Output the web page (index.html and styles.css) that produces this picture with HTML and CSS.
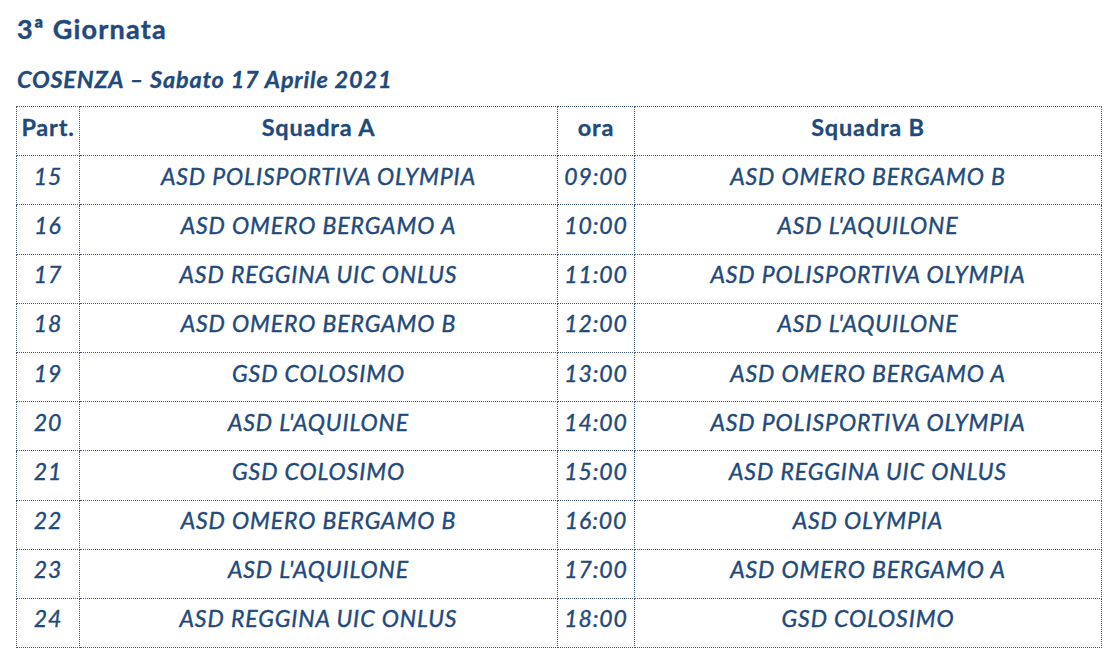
FILE: index.html
```html
<!DOCTYPE html>
<html lang="it">
<head>
<meta charset="utf-8">
<title>3ª Giornata</title>
<link rel="stylesheet" href="styles.css">
</head>
<body>
<div class="page">
  <h1 class="title">3ª Giornata</h1>
  <h2 class="subtitle">COSENZA – Sabato 17 Aprile 2021</h2>
  <table class="schedule">
    <colgroup>
      <col class="c-part"><col class="c-team"><col class="c-time"><col class="c-team-b">
    </colgroup>
    <thead>
      <tr><th>Part.</th><th>Squadra A</th><th>ora</th><th>Squadra B</th></tr>
    </thead>
    <tbody>
      <tr><td>15</td><td>ASD POLISPORTIVA OLYMPIA</td><td>09:00</td><td>ASD OMERO BERGAMO B</td></tr>
      <tr><td>16</td><td>ASD OMERO BERGAMO A</td><td>10:00</td><td>ASD L'AQUILONE</td></tr>
      <tr><td>17</td><td>ASD REGGINA UIC ONLUS</td><td>11:00</td><td>ASD POLISPORTIVA OLYMPIA</td></tr>
      <tr><td>18</td><td>ASD OMERO BERGAMO B</td><td>12:00</td><td>ASD L'AQUILONE</td></tr>
      <tr><td>19</td><td>GSD COLOSIMO</td><td>13:00</td><td>ASD OMERO BERGAMO A</td></tr>
      <tr><td>20</td><td>ASD L'AQUILONE</td><td>14:00</td><td>ASD POLISPORTIVA OLYMPIA</td></tr>
      <tr><td>21</td><td>GSD COLOSIMO</td><td>15:00</td><td>ASD REGGINA UIC ONLUS</td></tr>
      <tr><td>22</td><td>ASD OMERO BERGAMO B</td><td>16:00</td><td>ASD OLYMPIA</td></tr>
      <tr><td>23</td><td>ASD L'AQUILONE</td><td>17:00</td><td>ASD OMERO BERGAMO A</td></tr>
      <tr><td>24</td><td>ASD REGGINA UIC ONLUS</td><td>18:00</td><td>GSD COLOSIMO</td></tr>
    </tbody>
  </table>
</div>
</body>
</html>
```

FILE: styles.css
```css
html, body {
  margin: 0;
  padding: 0;
  background: #ffffff;
}

.page {
  padding: 13px 0 0 16px;
  font-family: "Lato", "Liberation Sans", sans-serif;
  color: #1f4a7c;
}

.title {
  margin: 0;
  font-size: 27px;
  font-weight: 700;
  line-height: 32px;
  letter-spacing: 1.2px;
  padding-left: 1px;
  -webkit-text-stroke: 0.4px #1f4a7c;
}

.subtitle {
  margin: 20px 0 0 0;
  font-size: 23.5px;
  font-weight: 700;
  font-style: italic;
  line-height: 28px;
  letter-spacing: 0.8px;
  padding-left: 1px;
  -webkit-text-stroke: 0.3px #1f4a7c;
}

.schedule {
  margin-top: 13px;
  border-collapse: collapse;
  table-layout: fixed;
  width: 1085px;
}

.c-part { width: 63px; }
.c-team { width: 478px; }
.c-time { width: 77px; }
.c-team-b { width: 467px; }

.schedule th,
.schedule td {
  border: 1px dotted #40587e;
  height: 49.2px;
  padding: 0 0 9px 0;
  box-sizing: border-box;
  text-align: center;
  vertical-align: middle;
  white-space: nowrap;
}

.schedule th {
  font-weight: 700;
  font-style: normal;
  font-size: 23.5px;
  letter-spacing: 0.8px;
  -webkit-text-stroke: 0.3px #1f4a7c;
}

.schedule td {
  font-style: italic;
  font-weight: 400;
  font-size: 23px;
  letter-spacing: 0.9px;
  -webkit-text-stroke: 0.4px #1f4a7c;
}
```
